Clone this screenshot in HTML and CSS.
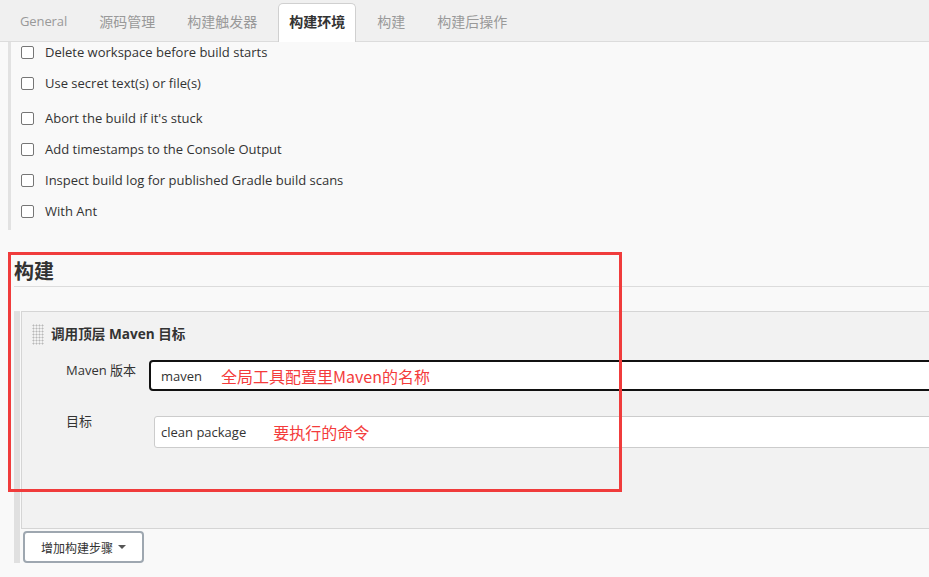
FILE: index.html
```html
<!DOCTYPE html>
<html lang="zh">
<head>
<meta charset="utf-8">
<title>Jenkins 配置</title>
<link rel="stylesheet" href="styles.css">
</head>
<body>
<div class="tabs">
  <div class="tab tab-latin">General</div>
  <div class="tab">源码管理</div>
  <div class="tab">构建触发器</div>
  <div class="tab active">构建环境</div>
  <div class="tab">构建</div>
  <div class="tab">构建后操作</div>
</div>

<div class="env">
  <label class="opt"><span class="cb"></span>Delete workspace before build starts</label>
  <label class="opt"><span class="cb"></span>Use secret text(s) or file(s)</label>
  <label class="opt opt-gap"><span class="cb"></span>Abort the build if it's stuck</label>
  <label class="opt"><span class="cb"></span>Add timestamps to the Console Output</label>
  <label class="opt"><span class="cb"></span>Inspect build log for published Gradle build scans</label>
  <label class="opt"><span class="cb"></span>With Ant</label>
</div>

<h2 class="sec-title">构建</h2>

<div class="builders">
  <div class="step">
    <div class="step-head">
      <span class="grip"></span>
      <span class="step-title">调用顶层 Maven 目标</span>
    </div>
    <div class="field">
      <div class="lbl">Maven 版本</div>
      <div class="inp inp-focus"><span class="val">maven</span><span class="note note-1">全局工具配置里Maven的名称</span></div>
    </div>
    <div class="field field-2">
      <div class="lbl">目标</div>
      <div class="inp inp-2"><span class="val">clean package</span><span class="note note-2">要执行的命令</span></div>
    </div>
  </div>
  <button class="add">增加构建步骤<span class="caret"></span></button>
</div>

<div class="annot"></div>
</body>
</html>
```

FILE: styles.css
```css
html, body {
  margin: 0;
  padding: 0;
  overflow: hidden;
}
body {
  background: #f9f9f9;
  font-family: "Open Sans", "Noto Sans CJK SC", sans-serif;
  color: #333;
  position: relative;
  width: 929px;
  height: 577px;
}

/* tabs */
.tabs {
  display: flex;
  align-items: flex-end;
  height: 41px;
  padding-left: 4px;
  background: #f0f0f0;
  border-bottom: 1px solid #dcdcdc;
}
.tab {
  margin: 0 5px -1px;
  padding: 0 10px;
  height: 38px;
  line-height: 35px;
  font-size: 14px;
  color: #999;
  border: 1px solid transparent;
  border-bottom: none;
  border-radius: 5px 5px 0 0;
  font-family: "Noto Sans CJK SC", sans-serif;
}
.tab-latin {
  font-family: "Open Sans", sans-serif;
  font-size: 13px;
  letter-spacing: -0.1px;
}
.tab.active {
  background: #fff;
  border-color: #d0d0d0;
  color: #333;
  font-weight: bold;
}

/* env options */
.env {
  margin-left: 8px;
  border-left: 3px solid #e2e2e2;
  padding: 0 0 9px 10px;
}
.opt {
  display: flex;
  align-items: center;
  height: 20px;
  margin-top: 11px;
  font-size: 13px;
  color: #333;
}
.opt:first-child { margin-top: 0; }
.opt-gap { margin-top: 15px; }
.cb {
  width: 13px;
  height: 13px;
  box-sizing: border-box;
  border: 1px solid #767676;
  border-radius: 2px;
  background: #fff;
  margin-right: 11px;
  flex: none;
}

/* section title */
.sec-title {
  margin: 28px 0 0 14px;
  padding-bottom: 0;
  font-size: 20px;
  line-height: 28px;
  font-weight: bold;
  color: #333;
  border-bottom: 1px solid #dcdcdc;
}

/* builders */
.builders {
  margin: 24px 0 0 14px;
  border-left: 6px solid #e0e0e0;
  padding-left: 1px;
}
.step {
  background: #f2f2f2;
  border: 1px solid #d5d5d5;
  border-right: none;
  padding: 12px 0 80px 10px;
}
.step-head {
  display: flex;
  align-items: center;
  height: 21px;
}
.grip {
  width: 12px;
  height: 21px;
  background-image: radial-gradient(circle, #b8b8b8 0.9px, transparent 1.1px);
  background-size: 3px 3px;
  flex: none;
}
.step-title {
  margin-left: 7px;
  font-size: 13.6px;
  font-weight: bold;
  line-height: 18px;
  margin-top: -2px;
  color: #333;
}
.field {
  display: flex;
  align-items: flex-start;
  margin-top: 15px;
  padding-left: 34px;
}
.field-2 { margin-top: 20px; }
.lbl {
  width: 83px;
  flex: none;
  font-size: 13px;
  line-height: 20px;
  color: #333;
}
.inp {
  flex: 1;
  margin-right: -20px;
  height: 31px;
  box-sizing: border-box;
  background: #fff;
  border: 2px solid #111;
  border-radius: 4px;
  display: flex;
  align-items: center;
  padding-left: 10px;
  font-size: 13px;
  color: #333;
}
.inp-2 {
  margin-top: 5px;
  margin-left: 5px;
  height: 32px;
  border: 1px solid #ccc;
  border-radius: 3px;
  padding-left: 6px;
}
.note {
  color: #f43b3b;
  font-size: 16px;
  font-family: "Noto Sans CJK SC", sans-serif;
}
.note-1 { margin-left: 19px; }
.note-2 { margin-left: 27px; }

.add {
  margin: 2px 0 0 2px;
  width: 121px;
  height: 32px;
  box-sizing: border-box;
  background: #fff;
  border: 2px solid #9ea7b0;
  border-radius: 4px;
  padding: 0 0 0 16px;
  font-family: "Noto Sans CJK SC", sans-serif;
  font-size: 12px;
  color: #333;
  display: flex;
  align-items: center;
}
.caret {
  width: 0;
  height: 0;
  margin-left: 5px;
  border-left: 4px solid transparent;
  border-right: 4px solid transparent;
  border-top: 4px solid #555;
}

/* red annotation rectangle */
.annot {
  position: absolute;
  left: 8px;
  top: 252px;
  width: 614px;
  height: 240px;
  box-sizing: border-box;
  border: 3px solid #f03c3c;
}
```
